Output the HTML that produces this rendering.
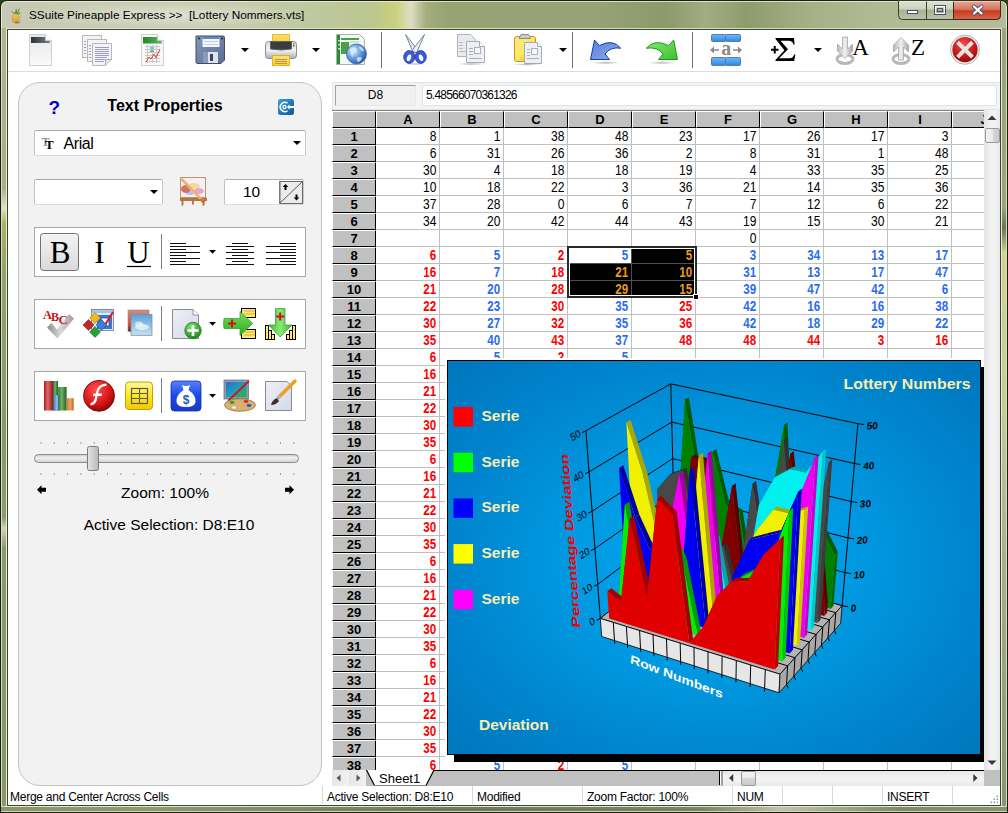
<!DOCTYPE html>
<html><head><meta charset="utf-8">
<style>
*{box-sizing:border-box;margin:0;padding:0}
html,body{width:1008px;height:813px;overflow:hidden;background:#2a4412}
body{position:relative;font-family:"Liberation Sans",sans-serif;font-size:12px;color:#000}
.a{position:absolute}
svg{position:absolute;overflow:visible}
#frame{left:0;top:0;width:1008px;height:813px;border:1px solid #1a2010;border-radius:7px 7px 0 0;box-shadow:inset 0 0 0 1px rgba(240,244,228,0.75);
 background:linear-gradient(90deg,#c6cab4 0px,#c8ccb2 200px,#c0c8a2 300px,#bcc68e 370px,#cad07c 395px,#dcdfc4 410px,#a4ae7c 425px,#96a272 450px,#96a274 600px,#8c9a6a 665px,#a2ad82 705px,#8e9c6c 745px,#a6b086 810px,#b2ba94 880px,#b4bc98 1008px)}
#sideL{left:1px;top:28px;width:6px;height:778px;border-left:1px solid #d8dcc8;border-right:1px solid #d8dcc8;background:linear-gradient(180deg,#b0b690 0,#a8b088 160px,#e0e4c8 180px,#a8b860 195px,#96a468 240px,#8a9866 400px,#8e9c6c 490px,#d0d4b8 500px,#8a9a6a 520px,#8a9868 778px)}
#sideR{left:1001px;top:28px;width:6px;height:778px;border-left:1px solid #d8dcc8;border-right:1px solid #d8dcc8;background:linear-gradient(180deg,#9ca67a 0,#9aa478 180px,#6a7458 200px,#d4d490 225px,#c8cc90 380px,#b8bc98 450px,#a4ac88 560px,#8a9470 778px)}
#sideB{left:1px;top:806px;width:1006px;height:6px;border-top:1px solid #d4d8c4;border-bottom:1px solid #d0d4c0;background:linear-gradient(90deg,#8a9666 0,#8e9a68 150px,#6e7a58 450px,#7a845e 700px,#c0c4a8 780px,#7f8c60 900px,#8a9466 1006px)}
#client{left:7px;top:29px;width:994px;height:777px;border:1px solid #3e4634;background:#fff;box-shadow:0 0 0 1px rgba(230,234,216,0.8)}
#title{left:29px;top:8px;font-size:11.8px;color:#000;white-space:pre}
#tbline{left:8px;top:71px;width:992px;height:1px;background:#dcdcdc}
#panel{left:18px;top:82px;width:304px;height:704px;background:#f2f2f2;border:1px solid #c4c4c4;border-radius:22px}
.box{background:#fff;border:1px solid #a8a8a8}
.combo{background:#fff;border:1px solid #b4b4b4;border-radius:2px}
.ddarr{width:0;height:0;border-left:4px solid transparent;border-right:4px solid transparent;border-top:4px solid #000}
#fbar{left:332px;top:82px;width:668px;height:28px;background:#f4f4f4;border:1px solid #e4e4e4;border-right:none}
#namebox{left:335px;top:85px;width:81px;height:21px;background:#f0f0f0;border:1px solid;border-color:#a0a0a0 #e8e8e8 #e8e8e8 #a0a0a0;text-align:center;line-height:19px}
#fin{left:422px;top:85px;width:575px;height:21px;background:#fff;border:1px solid #dde3ea;border-radius:2px;padding-left:3px;line-height:19px;letter-spacing:-0.8px}
.ch{top:111px;width:64px;height:17px;background:#c0c0c0;border-left:1px solid #fff;border-top:1px solid #fff;border-right:1px solid #000;border-bottom:1px solid #000;text-align:center;font-weight:bold;font-size:13px;line-height:15px}
.rh{left:332px;width:44px;height:17px;background:#c0c0c0;border-top:1px solid #fff;border-left:1px solid #fff;border-right:1px solid #000;border-bottom:1px solid #000;text-align:center;font-weight:bold;font-size:13px;line-height:15px}
.c{position:absolute;width:63px;height:16px;text-align:right;padding-right:3px;line-height:16px;font-size:13px}
.cr,.cb,.co{padding-right:3.6px;font-size:14.5px;transform:scaleX(0.8);transform-origin:100% 50%}
.cn{font-size:14px;transform:scaleX(0.86);transform-origin:100% 50%;padding-right:3px}
.cr{color:#ff0000;font-weight:bold}
.cb{color:#2c6cf0;font-weight:bold}
.co{color:#e89a1c;font-weight:bold}
#status{left:8px;top:786px;width:992px;height:19px;background:#fff}
.sep{top:786px;width:1px;height:18px;background:#d8d8d8}
.st{top:790px;font-size:12px;white-space:pre;letter-spacing:-0.25px}
</style></head>
<body>
<div id="frame" class="a"></div>
<div id="sideL" class="a"></div>
<div id="sideR" class="a"></div>
<div id="sideB" class="a"></div>
<div id="client" class="a"></div>
<div class="a" style="left:20px;top:2px;width:300px;height:26px;border-radius:13px;background:radial-gradient(ellipse 150px 13px at 150px 13px,rgba(240,242,232,0.55),rgba(240,242,232,0) 100%)"></div>
<div id="title" class="a">SSuite Pineapple Express &gt;&gt;  [Lottery Nommers.vts]</div>
<svg width="1008" height="40" style="left:0;top:0" viewBox="0 0 1008 40">
<defs>
<linearGradient id="gWb" x1="0" y1="0" x2="0" y2="1"><stop offset="0" stop-color="#dfe2d2"/><stop offset="0.45" stop-color="#cdd2bc"/><stop offset="0.5" stop-color="#a9b092"/><stop offset="1" stop-color="#bcc2a6"/></linearGradient>
<linearGradient id="gWc" x1="0" y1="0" x2="0" y2="1"><stop offset="0" stop-color="#e8a898"/><stop offset="0.45" stop-color="#d87a64"/><stop offset="0.55" stop-color="#c83c1c"/><stop offset="1" stop-color="#d8684c"/></linearGradient>
<linearGradient id="gPine" x1="0" y1="0" x2="0" y2="1"><stop offset="0" stop-color="#f0c860"/><stop offset="1" stop-color="#d89a30"/></linearGradient>
</defs>
<path d="M898.5 0.5 H1000.5 V15.5 Q1000.5 19.5 996.5 19.5 H902.5 Q898.5 19.5 898.5 15.5 Z" fill="url(#gWb)" stroke="#3a3e30"/>
<path d="M953.5 0.5 H1000.5 V15.5 Q1000.5 19.5 996.5 19.5 H953.5 Z" fill="url(#gWc)" stroke="#3a2a20"/>
<path d="M926.5 1 V19" stroke="#3a3e30"/>
<path d="M899.5 1.5 H999.5" stroke="#f0f2e8" stroke-opacity="0.6"/>
<rect x="907.5" y="10.5" width="10" height="3" fill="#fff" stroke="#4a4e6a"/>
<rect x="934.5" y="5.5" width="11" height="9" fill="none" stroke="#4a4e6a" stroke-width="1"/>
<rect x="935.5" y="6.5" width="9" height="7" fill="none" stroke="#fff" stroke-width="1"/>
<rect x="937.5" y="8.5" width="5" height="3" fill="none" stroke="#4a4e6a" stroke-width="1"/>
<path d="M974 6.5 L981.5 13.5 M981.5 6.5 L974 13.5" stroke="#4a4e6a" stroke-width="4" stroke-linecap="round"/>
<path d="M974 6.5 L981.5 13.5 M981.5 6.5 L974 13.5" stroke="#fff" stroke-width="2.3" stroke-linecap="round"/>
<!-- pineapple -->
<path d="M14.5 14 q1.5 -5 1.5 -6 q1 2 1 4 q1 -3 3 -4 q-1 3 -2 5 q2 -1 3 0 q-2 1 -3 2z M15 13 q-3 -2 -4 -2 q2 2 3 3z" fill="#5a9a3a"/>
<ellipse cx="15.7" cy="18.5" rx="3.6" ry="4.5" fill="url(#gPine)" stroke="#c88a28" stroke-width="0.5"/>
<ellipse cx="17.5" cy="22.5" rx="3" ry="1" fill="#000" opacity="0.25"/>
</svg>

<svg width="1008" height="813" style="left:0;top:0" viewBox="0 0 1008 813">
<defs>
<linearGradient id="gPage" x1="0" y1="0" x2="0" y2="1"><stop offset="0" stop-color="#e6e6e6"/><stop offset="1" stop-color="#fbfbfb"/></linearGradient>
<linearGradient id="gDark" x1="0" y1="0" x2="1" y2="0"><stop offset="0" stop-color="#2c3034"/><stop offset="1" stop-color="#7a8086"/></linearGradient>
<linearGradient id="gGreenBand" x1="0" y1="0" x2="1" y2="0"><stop offset="0" stop-color="#1c8a1c"/><stop offset="1" stop-color="#60b860"/></linearGradient>
<linearGradient id="gFloppy" x1="0" y1="0" x2="1" y2="1"><stop offset="0" stop-color="#8596b8"/><stop offset="1" stop-color="#5a6d94"/></linearGradient>
<linearGradient id="gSilver" x1="0" y1="0" x2="0" y2="1"><stop offset="0" stop-color="#d8dade"/><stop offset="0.5" stop-color="#f4f4f6"/><stop offset="1" stop-color="#a8acb4"/></linearGradient>
<linearGradient id="gYellow" x1="0" y1="0" x2="0" y2="1"><stop offset="0" stop-color="#ffe070"/><stop offset="1" stop-color="#f8d040"/></linearGradient>
<radialGradient id="gGlobe" cx="0.35" cy="0.35" r="0.7"><stop offset="0" stop-color="#e8f2ff"/><stop offset="0.5" stop-color="#6aa0e0"/><stop offset="1" stop-color="#2a5aa8"/></radialGradient>
<linearGradient id="gClip" x1="0" y1="0" x2="1" y2="1"><stop offset="0" stop-color="#fbe88a"/><stop offset="0.5" stop-color="#f8ec60"/><stop offset="1" stop-color="#f0a830"/></linearGradient>
<linearGradient id="gBlueArr" x1="0" y1="0" x2="1" y2="1"><stop offset="0" stop-color="#5a7ad8"/><stop offset="1" stop-color="#8ab4f0"/></linearGradient>
<linearGradient id="gGreenArr" x1="0" y1="0" x2="1" y2="1"><stop offset="0" stop-color="#8ae878"/><stop offset="1" stop-color="#3cc02c"/></linearGradient>
<linearGradient id="gMerge" x1="0" y1="0" x2="0" y2="1"><stop offset="0" stop-color="#6ab8ff"/><stop offset="1" stop-color="#2c8ae8"/></linearGradient>
<linearGradient id="gGrayArr" x1="0" y1="0" x2="1" y2="0"><stop offset="0" stop-color="#b8b8b8"/><stop offset="0.5" stop-color="#f0f0f0"/><stop offset="1" stop-color="#a8a8a8"/></linearGradient>
<radialGradient id="gRed" cx="0.45" cy="0.3" r="0.75"><stop offset="0" stop-color="#f45050"/><stop offset="0.6" stop-color="#c81818"/><stop offset="1" stop-color="#8a0808"/></radialGradient>
<radialGradient id="gShadow" cx="0.5" cy="0.5" r="0.5"><stop offset="0" stop-color="#000" stop-opacity="0.28"/><stop offset="1" stop-color="#000" stop-opacity="0"/></radialGradient>
</defs>
<!-- new doc -->
<path d="M29.5 34.5 H45.5 L51.5 40.5 V65.5 H29.5 Z" fill="url(#gPage)" stroke="#d0d0d0"/>
<path d="M31 37 H45 L50 42 V43 H31 Z" fill="url(#gDark)"/>
<path d="M45.5 34.5 V40.5 H51.5" fill="#fff" stroke="#c8c8c8"/>
<!-- copies -->
<g stroke="#b8b8b8" fill="#f4f4f4">
<rect x="82.5" y="35.5" width="19" height="22"/>
<rect x="87.5" y="39.5" width="19" height="22"/>
<path d="M92.5 43.5 H111.5 V59.5 L105.5 65.5 H92.5 Z"/>
</g>
<g stroke="#9a9ad8" stroke-width="1">
<path d="M84 41.5h2M84 44.5h2M84 47.5h2M84 50.5h2M84 53.5h2M89 45.5h2M89 48.5h2M89 51.5h2M89 54.5h2M89 57.5h2"/>
<path d="M95 47.5h14M95 49.5h14M95 51.5h14M95 53.5h14M95 55.5h14M95 57.5h12M95 59.5h10M95 61.5h9"/>
</g>
<path d="M105.5 65.5 V59.5 H111.5" fill="#e0e0e0" stroke="#b0b0b0"/>
<!-- spreadsheet -->
<path d="M141.5 34.5 H157.5 L163.5 40.5 V65.5 H141.5 Z" fill="#f8f8f8" stroke="#d0d0d0"/>
<path d="M143 37 H157 L162 42 V43.5 H143 Z" fill="url(#gGreenBand)"/>
<path d="M157.5 34.5 V40.5 H163.5" fill="#fff" stroke="#c8c8c8"/>
<g stroke="#c8c8c8" stroke-width="1" fill="none">
<path d="M145 46.5h15M145 49.5h15M145 52.5h15M145 55.5h15M145 58.5h15M145 61.5h15M147.5 45v18M152.5 45v18M156.5 45v18"/>
</g>
<rect x="150" y="47" width="4" height="2" fill="#8ab8e8"/><rect x="150" y="50" width="4" height="2" fill="#6ac86a"/>
<path d="M146 62 L149 57 L151 59 L154 54 L156 58 L160 49" fill="none" stroke="#e04040" stroke-width="1"/>
<!-- floppy -->
<path d="M196 36 H223 Q224.5 36 224.5 37.5 V60 L221 63.5 H197.5 Q196 63.5 196 62 Z" fill="url(#gFloppy)" stroke="#3c4c6c"/>
<rect x="202.5" y="37" width="17" height="10" fill="#f4f6fa"/>
<rect x="202.5" y="37" width="17" height="2" fill="#5a8ad0"/>
<path d="M204 41.5h14M204 44.5h14" stroke="#c8d0e0"/>
<rect x="203" y="52" width="15" height="11" fill="#dfe4ec"/>
<rect x="210" y="54" width="3" height="7" fill="#3a4658"/>
<rect x="203" y="52" width="5" height="11" fill="#8c9ab4"/>
<circle cx="199" cy="38.5" r="1" fill="#222"/><circle cx="222" cy="38.5" r="1" fill="#222"/>
<!-- dropdowns -->
<path d="M241 48 h8 l-4 4 z M312 48 h8 l-4 4 z M559 48 h8 l-4 4 z M814 48 h8 l-4 4 z" fill="#000"/>
<!-- printer -->
<rect x="272.5" y="34.5" width="17" height="7" fill="url(#gYellow)" stroke="#e8b830"/>
<rect x="265.5" y="41.5" width="31" height="17" rx="3" fill="url(#gSilver)" stroke="#8a9098"/>
<path d="M270.5 41.5 H291.5 V49 Q281 51 270.5 49 Z" fill="#3a3c40" stroke="#606468"/>
<rect x="293" y="43" width="1.5" height="1.5" fill="#30c030"/><rect x="293" y="45" width="1.5" height="1.5" fill="#e03030"/>
<rect x="272.5" y="55.5" width="17" height="10" fill="url(#gYellow)" stroke="#e8b020"/>
<path d="M275 59.5h12M275 61.5h12M275 63.5h12" stroke="#b89a40"/>
<!-- web doc -->
<path d="M336.5 34.5 H359.5 L364.5 39.5 V64.5 H336.5 Z" fill="#f4f8f4" stroke="#a0b8a0"/>
<rect x="337" y="35" width="3" height="29" fill="#2e8a3a"/>
<path d="M341 38h18v2h-18z M341 42h8v12h-8z" fill="#48a048"/>
<path d="M349.5 42h10M349.5 45h10M349.5 48h10" stroke="#b0d0b0"/>
<rect x="338" y="40" width="2" height="1.5" fill="#a8e0a8"/><rect x="338" y="44" width="2" height="1.5" fill="#a8e0a8"/><rect x="338" y="48" width="2" height="1.5" fill="#a8e0a8"/>
<circle cx="356.5" cy="54" r="10" fill="url(#gGlobe)" stroke="#3a64a8" stroke-width="0.8"/>
<path d="M350 49 q3 -3 6 -1 q2 3 -1 5 q-3 1 -2 4 q-3 -2 -3 -8z M359 46 q4 1 5 5 q-2 1 -3 -1 q-2 -1 -2 -4z M357 58 q3 -2 5 0 q-1 3 -4 4 q-2 -2 -1 -4z" fill="#d8e8f8" opacity="0.85"/>
<!-- separators -->
<path d="M381.5 32v36M572.5 32v36M692.5 32v36" stroke="#707070"/>
<!-- scissors -->
<path d="M405.5 34.5 L418 50.5 L413.5 53 Z" fill="#e4e8f0" stroke="#6a7a98" stroke-width="0.9" stroke-linejoin="round"/>
<path d="M424.5 34.5 L412 50.5 L416.5 53 Z" fill="#eef0f6" stroke="#6a7a98" stroke-width="0.9" stroke-linejoin="round"/>
<ellipse cx="409.3" cy="57" rx="5.6" ry="6.4" fill="#3a5ad8" stroke="#20359a" stroke-width="0.8"/>
<ellipse cx="420.7" cy="57" rx="5.6" ry="6.4" fill="#3a5ad8" stroke="#20359a" stroke-width="0.8"/>
<ellipse cx="409" cy="57.8" rx="2" ry="3.4" fill="#fff" transform="rotate(20 409 57.8)"/>
<ellipse cx="421" cy="57.8" rx="2" ry="3.4" fill="#fff" transform="rotate(-20 421 57.8)"/>
<ellipse cx="415" cy="64" rx="11" ry="1.3" fill="url(#gShadow)"/>
<!-- copy -->
<path d="M457.5 34.5 H470.5 L475.5 39.5 V56.5 H457.5 Z" fill="#e8eaee" stroke="#b0b4bc"/>
<path d="M459 42.5h4M459 45.5h4M459 48.5h4M459 51.5h12" stroke="#b8bcc4"/>
<path d="M466.5 41.5 H479.5 L484.5 46.5 V62.5 H466.5 Z" fill="#eef0f4" stroke="#a8acb4"/>
<path d="M469 48.5h4M469 51.5h4M469 54.5h4M469 58.5h13" stroke="#a8b0c0"/>
<rect x="474.5" y="47.5" width="6" height="6" fill="#f6f8fa" stroke="#a8b0c0"/>
<path d="M479.5 41.5 V46.5 H484.5" fill="#fff" stroke="#a8acb4"/>
<ellipse cx="471" cy="64" rx="14" ry="1.5" fill="url(#gShadow)"/>
<!-- paste -->
<rect x="514.5" y="36.5" width="21" height="25" rx="2.5" fill="url(#gClip)" stroke="#d88a18"/>
<path d="M519 38.5 L521 34.5 H528.5 L530.5 38.5 Z" fill="#c8ccd0" stroke="#8a8e94"/>
<path d="M524.5 42.5 H537.5 L541.5 46.5 V63.5 H524.5 Z" fill="#eef0f6" stroke="#a8acb8"/>
<path d="M527 49.5h3M527 52.5h3M527 55.5h3M527 58.5h12" stroke="#a8b0c0"/>
<rect x="531.5" y="48.5" width="6" height="6" fill="#f6f8fa" stroke="#a8b0c0"/>
<path d="M537.5 42.5 V46.5 H541.5" fill="#fff" stroke="#a8acb8"/>
<ellipse cx="527" cy="64.5" rx="15" ry="1.3" fill="url(#gShadow)"/>
<!-- undo -->
<path d="M594.5 40 L590.5 59.5 H609.5 L605 54 Q610.5 46.5 620.7 48.2 Q613 38.5 599.5 45.5 Z" fill="url(#gBlueArr)" stroke="#1c3aa8" stroke-width="1" stroke-linejoin="round"/>
<ellipse cx="606" cy="62.8" rx="14" ry="1.7" fill="url(#gShadow)"/>
<!-- redo -->
<path d="M673.7 40 L677.5 59.5 H658.5 L663 54 Q657.5 46.5 646.3 48.2 Q655 38.5 668.5 45.5 Z" fill="url(#gGreenArr)" stroke="#1c9a1c" stroke-width="1" stroke-linejoin="round"/>
<ellipse cx="662" cy="62.8" rx="14" ry="1.7" fill="url(#gShadow)"/>
<!-- merge -->
<rect x="711.5" y="34.5" width="14" height="7" rx="1" fill="url(#gMerge)" stroke="#607890"/>
<rect x="725.5" y="34.5" width="15" height="7" rx="1" fill="url(#gMerge)" stroke="#607890"/>
<rect x="711.5" y="57.5" width="14" height="8" rx="1" fill="url(#gMerge)" stroke="#607890"/>
<rect x="725.5" y="57.5" width="15" height="8" rx="1" fill="url(#gMerge)" stroke="#607890"/>
<text x="726.2" y="54.8" font-family="Liberation Serif" font-weight="bold" font-size="20" fill="#8a8a8a" text-anchor="middle">a</text>
<path d="M711 50h8M741 50h-8" stroke="#8a8a8a" stroke-width="1.6"/>
<path d="M710 50 l4 -3.5 v7z M742 50 l-4 -3.5 v7z" fill="#8a8a8a"/>
<!-- sum -->
<path d="M771 49.8h7.5M774.75 46v7.6" stroke="#000" stroke-width="2"/>
<path d="M775.5 38 H794 L794.6 44.5 H793.4 Q792.6 40.8 788.6 40.8 H780.6 L788 49.3 L779.2 58.2 H789.6 Q793.2 58.2 794.2 54.6 H795.4 L794.2 61 H775.5 V60 L784.4 50.3 L775.5 39 Z" fill="#000"/>
<!-- sort A -->
<ellipse cx="845" cy="59" rx="8" ry="4.5" fill="none" stroke="#b8b8b8" stroke-width="3"/>
<path d="M842.5 37 h5 v12 l5 -5 v7 l-7.5 7.5 l-7.5 -7.5 v-7 l5 5 z" fill="url(#gGrayArr)" stroke="#a8a8a8" stroke-width="0.8"/>
<text x="860.5" y="55" font-family="Liberation Serif" font-size="23" fill="#000" text-anchor="middle">A</text>
<!-- sort Z -->
<ellipse cx="901" cy="59" rx="8" ry="4.5" fill="none" stroke="#b8b8b8" stroke-width="3"/>
<path d="M898.5 60 h5 v-13 l5 5 v-7 l-7.5 -7.5 l-7.5 7.5 v7 l5 -5 z" fill="url(#gGrayArr)" stroke="#a8a8a8" stroke-width="0.8"/>
<text x="918" y="55" font-family="Liberation Serif" font-size="23" fill="#000" text-anchor="middle">Z</text>
<!-- close -->
<circle cx="965" cy="49.7" r="14.6" fill="#e8e8e8" stroke="#b8b8b8"/>
<circle cx="965" cy="49.7" r="12.6" fill="url(#gRed)"/>
<path d="M959 43.7 L971 55.7 M971 43.7 L959 55.7" stroke="#e4e4e4" stroke-width="4" stroke-linecap="square"/>
</svg>

<div id="tbline" class="a"></div>

<div id="panel" class="a"></div>
<div class="a combo" style="left:34px;top:130px;width:272px;height:26px;border-color:#a8a8a8 #c8c8c8 #d8dce4 #c0c0c0"></div>
<div class="a combo" style="left:34px;top:179px;width:129px;height:26px;border-color:#a8a8a8 #c8c8c8 #d8dce4 #c0c0c0"></div>
<div class="a combo" style="left:224px;top:179px;width:80px;height:26px;border-color:#b0b0b0 #c8c8c8 #d8dce4 #c0c0c0"></div>
<div class="a box" style="left:34px;top:227px;width:272px;height:50px"></div>
<div class="a box" style="left:34px;top:299px;width:272px;height:50px"></div>
<div class="a box" style="left:34px;top:371px;width:272px;height:50px"></div>
<svg width="1008" height="813" style="left:0;top:0" viewBox="0 0 1008 813">
<defs>
<linearGradient id="pBlue" x1="0" y1="0" x2="1" y2="1"><stop offset="0" stop-color="#38a0e0"/><stop offset="1" stop-color="#0a5a9c"/></linearGradient>
<linearGradient id="pBtn" x1="0" y1="0" x2="0" y2="1"><stop offset="0" stop-color="#f4f4f4"/><stop offset="1" stop-color="#dadada"/></linearGradient>
<linearGradient id="pTrack" x1="0" y1="0" x2="0" y2="1"><stop offset="0" stop-color="#c8c8c8"/><stop offset="0.4" stop-color="#f0f0f0"/><stop offset="1" stop-color="#d0d0d0"/></linearGradient>
<linearGradient id="pThumb" x1="0" y1="0" x2="1" y2="0"><stop offset="0" stop-color="#e4e4e4"/><stop offset="1" stop-color="#b8b8b8"/></linearGradient>
<linearGradient id="pEasel" x1="0" y1="0" x2="1" y2="1"><stop offset="0" stop-color="#f8e8f0"/><stop offset="0.3" stop-color="#e06848"/><stop offset="0.5" stop-color="#f0d060"/><stop offset="0.7" stop-color="#e868b8"/><stop offset="1" stop-color="#f8f0f0"/></linearGradient>
</defs>
<text x="48.5" y="114" font-family="Liberation Sans" font-weight="bold" font-size="19" fill="#0000c8">?</text>
<text x="165" y="110.8" font-family="Liberation Sans" font-weight="bold" font-size="16" fill="#000" text-anchor="middle">Text Properties</text>
<rect x="278" y="99" width="16" height="16" rx="2.5" fill="url(#pBlue)"/>
<path d="M287.5 103.2 A4.6 4.6 0 1 0 287.5 110.8" fill="none" stroke="#fff" stroke-width="1.6"/>
<circle cx="284.5" cy="107" r="1.6" fill="none" stroke="#fff" stroke-width="1.3"/>
<path d="M288.5 107 H294.5" stroke="#fff" stroke-width="2"/>
<path d="M287 107 l2.5 -2.8 v5.6 z" fill="#fff"/>
<!-- font icon -->
<text x="41.5" y="146" font-family="Liberation Serif" font-weight="bold" font-size="12" fill="#909090">T</text>
<text x="45" y="149" font-family="Liberation Serif" font-weight="bold" font-size="13" fill="#000">T</text>
<text x="63.5" y="149" font-family="Liberation Sans" font-size="16" fill="#000" letter-spacing="-0.4">Arial</text>
<path d="M293 141 h8 l-4 4 z M150 190 h8 l-4 4 z" fill="#000"/>
<!-- easel -->
<rect x="180.5" y="177.5" width="25" height="20" fill="#f6f0f4" stroke="#c09070"/>
<ellipse cx="186" cy="189" rx="5" ry="4" fill="#c84830" opacity="0.75"/>
<ellipse cx="194" cy="186" rx="6" ry="3" fill="#f0d070" opacity="0.7"/>
<ellipse cx="199" cy="191" rx="5" ry="3" fill="#e070c0" opacity="0.6"/>
<ellipse cx="190" cy="193" rx="4" ry="2" fill="#70a0e0" opacity="0.5"/>
<path d="M180 198 h27 v3 h-27z" fill="#b07840"/>
<path d="M182.5 201 v4.5 M193 201 v3.5 M203.5 201 v4.5" stroke="#a87040" stroke-width="1.8"/>
<path d="M181.5 179 L203 201" stroke="#f0b070" stroke-width="2.6"/>
<path d="M200.5 199 L204.5 203" stroke="#d87030" stroke-width="2.8"/>
<!-- spin -->
<text x="243" y="197" font-family="Liberation Sans" font-size="15.5" fill="#000">10</text>
<rect x="279.5" y="181.5" width="23" height="22" fill="#ececec" stroke="#8a8a8a"/>
<path d="M280 203 L302.5 181.5" stroke="#5a5a5a" stroke-width="1"/>
<path d="M280 181.5 H302.5 V203.5 M280 181.5 V203.5 H302.5" fill="none" stroke="#6a6a6a"/>
<path d="M285.5 184 l-2.8 3 h1.8 v3 h2 v-3 h1.8 z M296.5 200.5 l-2.8 -3 h1.8 v-3 h2 v3 h1.8 z" fill="#000"/>
<!-- B I U -->
<rect x="40.5" y="233.5" width="38" height="37" rx="3" fill="url(#pBtn)" stroke="#707070"/>
<text x="60" y="262.5" font-family="Liberation Serif" font-size="31" fill="#000" text-anchor="middle">B</text>
<text x="99.5" y="262.5" font-family="Liberation Serif" font-size="31" fill="#000" text-anchor="middle">I</text>
<text x="138.5" y="262.5" font-family="Liberation Serif" font-size="31" fill="#000" text-anchor="middle">U</text>
<path d="M127 266.5 H151" stroke="#000" stroke-width="1.2"/>
<path d="M161.5 234 V269 M161.5 306 V341 M161.5 378 V413" stroke="#7a7a7a"/>
<g stroke="#111" stroke-width="1">
<path d="M170 243.5h16M170 246.5h30M170 249.5h16M170 252.5h30M170 255.5h16M170 258.5h30M170 261.5h16M170 264.5h30"/>
<path d="M232 243.5h16M226 246.5h28M232 249.5h16M226 252.5h28M232 255.5h16M226 258.5h28M232 261.5h16M226 264.5h28"/>
<path d="M280 243.5h16M266 246.5h30M280 249.5h16M266 252.5h30M280 255.5h16M266 258.5h30M280 261.5h16M266 264.5h30"/>
</g>
<path d="M209 250 h7 l-3.5 3.7 z M209 322 h7 l-3.5 3.7 z M209 394 h7 l-3.5 3.7 z" fill="#000"/>
</svg>
<svg width="1008" height="813" style="left:0;top:0" viewBox="0 0 1008 813">
<defs>
<linearGradient id="iGray" x1="0" y1="0" x2="1" y2="0"><stop offset="0" stop-color="#8a8a8a"/><stop offset="0.5" stop-color="#d8d8d8"/><stop offset="1" stop-color="#9a9a9a"/></linearGradient>
<linearGradient id="iSky" x1="0" y1="0" x2="0" y2="1"><stop offset="0" stop-color="#5aa0d8"/><stop offset="1" stop-color="#c8e0f0"/></linearGradient>
<linearGradient id="iSunset" x1="0" y1="0" x2="0" y2="1"><stop offset="0" stop-color="#c89090"/><stop offset="0.6" stop-color="#e05030"/><stop offset="1" stop-color="#602020"/></linearGradient>
<linearGradient id="iPage" x1="0" y1="0" x2="1" y2="1"><stop offset="0" stop-color="#eef0f8"/><stop offset="1" stop-color="#d4d8e8"/></linearGradient>
<radialGradient id="iGreenC" cx="0.4" cy="0.3" r="0.7"><stop offset="0" stop-color="#8ae070"/><stop offset="1" stop-color="#1a8a1a"/></radialGradient>
<linearGradient id="iGreenA" x1="0" y1="0" x2="0" y2="1"><stop offset="0" stop-color="#7ae060"/><stop offset="1" stop-color="#2aaa1a"/></linearGradient>
<linearGradient id="iGreenD" x1="0" y1="0" x2="1" y2="0"><stop offset="0" stop-color="#3ab82a"/><stop offset="0.5" stop-color="#8ae878"/><stop offset="1" stop-color="#3ab82a"/></linearGradient>
<radialGradient id="iFlash" cx="0.4" cy="0.3" r="0.75"><stop offset="0" stop-color="#ff5050"/><stop offset="0.7" stop-color="#d01010"/><stop offset="1" stop-color="#7a0808"/></radialGradient>
<linearGradient id="iYel" x1="0" y1="0" x2="0" y2="1"><stop offset="0" stop-color="#fff8a0"/><stop offset="0.5" stop-color="#ffe820"/><stop offset="1" stop-color="#f0c800"/></linearGradient>
<linearGradient id="iBlueSq" x1="0" y1="0" x2="0" y2="1"><stop offset="0" stop-color="#5a80f8"/><stop offset="0.5" stop-color="#1a48e8"/><stop offset="1" stop-color="#1a38c8"/></linearGradient>
<linearGradient id="iScreen" x1="0" y1="0" x2="1" y2="1"><stop offset="0" stop-color="#2a70d0"/><stop offset="0.55" stop-color="#20a0b0"/><stop offset="1" stop-color="#30b030"/></linearGradient>
<linearGradient id="iRedBar" x1="0" y1="0" x2="1" y2="0"><stop offset="0" stop-color="#a82020"/><stop offset="0.4" stop-color="#e06868"/><stop offset="1" stop-color="#901818"/></linearGradient>
<linearGradient id="iGrnBar" x1="0" y1="0" x2="1" y2="0"><stop offset="0" stop-color="#2a7a2a"/><stop offset="0.4" stop-color="#70b070"/><stop offset="1" stop-color="#206020"/></linearGradient>
<linearGradient id="iBluBar" x1="0" y1="0" x2="1" y2="0"><stop offset="0" stop-color="#3a70c0"/><stop offset="0.5" stop-color="#90c0f0"/><stop offset="1" stop-color="#3a68b0"/></linearGradient>
<linearGradient id="iOrBar" x1="0" y1="0" x2="1" y2="0"><stop offset="0" stop-color="#c87830"/><stop offset="0.5" stop-color="#e8a860"/><stop offset="1" stop-color="#b86828"/></linearGradient>
</defs>
<!-- ABC check -->
<path d="M47 327.5 L51.5 323 L57 329.5 L69 314 L74 318.5 L57.5 338.5 Z" fill="url(#iGray)"/>
<text x="43" y="319" font-family="Liberation Serif" font-weight="bold" font-size="12.5" fill="#c81818">A</text>
<text x="51" y="321" font-family="Liberation Serif" font-weight="bold" font-size="12" fill="#c81818">B</text>
<text x="58.5" y="323.5" font-family="Liberation Serif" font-weight="bold" font-size="13" fill="#c81818">C</text>
<!-- window + diamonds -->
<rect x="91.5" y="309.5" width="22" height="21" fill="#dfe8f4" stroke="#8090a8"/>
<rect x="92" y="310" width="21" height="3" fill="#a8c4e8"/>
<rect x="97" y="315" width="15" height="14" fill="#3a78d0"/>
<rect x="101" y="318" width="8" height="8" fill="#fff" stroke="#2050a0" stroke-width="0.8"/>
<path d="M101 320 L105 325 L113 312" fill="none" stroke="#e01818" stroke-width="2"/>
<path d="M95 312.5 L100.5 318 L95 323.5 L89.5 318 Z" fill="#f0b818" stroke="#8a6a10" stroke-width="0.5"/>
<path d="M88.5 319.5 L94 325 L88.5 330.5 L83 325 Z" fill="#c02828" stroke="#6a1010" stroke-width="0.5"/>
<path d="M101.5 319.5 L107 325 L101.5 330.5 L96 325 Z" fill="#3a80d8" stroke="#1a4080" stroke-width="0.5"/>
<path d="M95 326.5 L100.5 332 L95 337.5 L89.5 332 Z" fill="#28a038" stroke="#106018" stroke-width="0.5"/>
<!-- photos -->
<rect x="128" y="310" width="21" height="21.5" fill="url(#iSunset)" stroke="#a08080" stroke-width="0.6"/>
<rect x="131" y="314.3" width="21" height="21" fill="url(#iSky)" stroke="#8090a0" stroke-width="0.8"/>
<ellipse cx="142" cy="327" rx="7" ry="3" fill="#eef4fa" opacity="0.8"/>
<ellipse cx="139" cy="324" rx="4" ry="2.5" fill="#eef4fa" opacity="0.7"/>
<!-- new page + plus -->
<path d="M172.5 309.5 H193 L198.5 315 V338.5 H172.5 Z" fill="url(#iPage)" stroke="#8a8a8a"/>
<path d="M193 309.5 V315 H198.5" fill="#fff" stroke="#9a9a9a"/>
<circle cx="193" cy="330.5" r="8.2" fill="url(#iGreenC)" stroke="#1a7a1a" stroke-width="0.8"/>
<path d="M193 325 V336 M187.5 330.5 H198.5" stroke="#fff" stroke-width="2.6"/>
<!-- arrow right + boxes -->
<g stroke="#000" stroke-width="1" fill="#ffe878">
<rect x="241.5" y="308.5" width="14" height="9"/>
<rect x="241.5" y="329.5" width="14" height="9"/>
</g>
<path d="M244 311h11M244 314h11M244 332h11M244 335h11" stroke="#d8b020"/>
<path d="M224 318.5 H240 V311.5 L252.7 323.4 L240 335.5 V328.5 H224 Q223 323.5 224 318.5 Z" fill="url(#iGreenA)" stroke="#2a9a2a" stroke-width="0.7"/>
<path d="M232 319.5 V327.5 M228 323.5 H236" stroke="#d01010" stroke-width="2"/>
<!-- arrow down + bars -->
<g stroke="#000" stroke-width="1" fill="#ffe878">
<rect x="265.5" y="325.5" width="3" height="14"/><rect x="268.5" y="330.5" width="3" height="9"/><rect x="271.5" y="334.5" width="3" height="5"/>
<rect x="292.5" y="325.5" width="3" height="14"/><rect x="289.5" y="330.5" width="3" height="9"/><rect x="286.5" y="334.5" width="3" height="5"/>
</g>
<path d="M275.5 308.5 H285 V325 H292 L280.2 337 L268.5 325 H275.5 Z" fill="url(#iGreenD)" stroke="#2a9a2a" stroke-width="0.7"/>
<path d="M280.2 312.5 V320.5 M276.2 316.5 H284.2" stroke="#d01010" stroke-width="2"/>
<!-- bar chart -->
<rect x="53" y="381" width="5" height="29.5" fill="url(#iGrnBar)"/>
<rect x="44" y="381" width="9.2" height="29.5" fill="url(#iRedBar)"/>
<rect x="53.5" y="395.2" width="6.5" height="15.3" fill="url(#iBluBar)"/>
<rect x="58.2" y="387" width="8.4" height="23.5" fill="url(#iGrnBar)"/>
<rect x="66.6" y="398.2" width="7.1" height="12.3" fill="url(#iOrBar)"/>
<!-- flash -->
<circle cx="99" cy="395.8" r="15.5" fill="url(#iFlash)" stroke="#6a0a0a" stroke-width="0.8"/>
<path d="M106.5 386 Q100 385.5 98.5 392 L96.5 401 Q95 405 90.5 405.5 L90.5 403 Q93.5 402.5 94.5 399.5 L96.5 391 Q98.5 383.5 106.5 383.5 Z M93.5 393.5 H102 L101.5 396 H93 Z" fill="#fff"/>
<!-- yellow table -->
<rect x="125.5" y="382" width="27" height="27.5" rx="3.5" fill="url(#iYel)" stroke="#c8a000"/>
<rect x="131.5" y="388.5" width="16" height="15" fill="none" stroke="#5a5a5a" stroke-width="1.2"/>
<path d="M139.5 388.5 V403.5 M131.5 393.5 H147.5 M131.5 398.5 H147.5" stroke="#5a5a5a" stroke-width="1.1"/>
<!-- money bag -->
<rect x="171" y="381" width="30" height="30" rx="3.5" fill="url(#iBlueSq)" stroke="#1030a0" stroke-width="0.8"/>
<path d="M182 385 Q186 387 190 385 L188.5 390 Q196 395 195.5 402 Q195 407 186 407 Q177 407 176.5 402 Q176 395 183.5 390 Z" fill="#fff"/>
<text x="186" y="404" font-family="Liberation Sans" font-weight="bold" font-size="12" fill="#1a60c0" text-anchor="middle">$</text>
<!-- monitor + palette -->
<rect x="224" y="380" width="24.5" height="19" fill="#8a9ab0" stroke="#6a7890" stroke-width="0.8"/>
<rect x="226" y="382" width="20.5" height="15" fill="url(#iScreen)"/>
<path d="M233 401 h8 v2 h-8z" fill="#a0a8b8"/>
<path d="M249 381 L228 401" stroke="#c81818" stroke-width="1.8"/>
<ellipse cx="240" cy="405" rx="15.5" ry="6.3" fill="#d8b070" stroke="#8a6a30" stroke-width="0.7"/>
<ellipse cx="232" cy="402.5" rx="2.5" ry="1.4" fill="#28a028"/><ellipse cx="246" cy="401.5" rx="2.5" ry="1.4" fill="#e02828"/><ellipse cx="249" cy="405.5" rx="2.5" ry="1.4" fill="#2858d0"/><ellipse cx="234" cy="407.5" rx="2" ry="1.2" fill="#f0f0f0"/>
<!-- doc + brush -->
<path d="M265.5 381.5 H287 L291.5 386 V410.5 H265.5 Z" fill="url(#iPage)" stroke="#8a8a8a"/>
<path d="M295 381 L279 397" stroke="#f0a020" stroke-width="3.5" stroke-linecap="round"/>
<path d="M280 396 L277.5 398.5" stroke="#b0b0b0" stroke-width="3"/>
<path d="M277 398 Q272 400 271 405 Q276 405 279 401 Z" fill="#3a3020"/>
</svg>

<svg width="1008" height="813" style="left:0;top:0" viewBox="0 0 1008 813">
<g fill="#a0a0a0">
<rect x="40.5" y="442" width="1" height="2"/><rect x="40.5" y="473" width="1" height="2"/>
<rect x="53.8" y="442" width="1" height="2"/><rect x="53.8" y="473" width="1" height="2"/>
<rect x="67.1" y="442" width="1" height="2"/><rect x="67.1" y="473" width="1" height="2"/>
<rect x="80.4" y="442" width="1" height="2"/><rect x="80.4" y="473" width="1" height="2"/>
<rect x="93.7" y="442" width="1" height="2"/><rect x="93.7" y="473" width="1" height="2"/>
<rect x="107.0" y="442" width="1" height="2"/><rect x="107.0" y="473" width="1" height="2"/>
<rect x="120.3" y="442" width="1" height="2"/><rect x="120.3" y="473" width="1" height="2"/>
<rect x="133.6" y="442" width="1" height="2"/><rect x="133.6" y="473" width="1" height="2"/>
<rect x="146.9" y="442" width="1" height="2"/><rect x="146.9" y="473" width="1" height="2"/>
<rect x="160.2" y="442" width="1" height="2"/><rect x="160.2" y="473" width="1" height="2"/>
<rect x="173.6" y="442" width="1" height="2"/><rect x="173.6" y="473" width="1" height="2"/>
<rect x="186.9" y="442" width="1" height="2"/><rect x="186.9" y="473" width="1" height="2"/>
<rect x="200.2" y="442" width="1" height="2"/><rect x="200.2" y="473" width="1" height="2"/>
<rect x="213.5" y="442" width="1" height="2"/><rect x="213.5" y="473" width="1" height="2"/>
<rect x="226.8" y="442" width="1" height="2"/><rect x="226.8" y="473" width="1" height="2"/>
<rect x="240.1" y="442" width="1" height="2"/><rect x="240.1" y="473" width="1" height="2"/>
<rect x="253.4" y="442" width="1" height="2"/><rect x="253.4" y="473" width="1" height="2"/>
<rect x="266.7" y="442" width="1" height="2"/><rect x="266.7" y="473" width="1" height="2"/>
<rect x="280.0" y="442" width="1" height="2"/><rect x="280.0" y="473" width="1" height="2"/>
<rect x="293.3" y="442" width="1" height="2"/><rect x="293.3" y="473" width="1" height="2"/>
</g>
<rect x="34.5" y="454.5" width="264" height="8" rx="4" fill="url(#pTrack)" stroke="#8a8a8a"/>
<rect x="87.5" y="446.5" width="11" height="24" rx="2" fill="url(#pThumb)" stroke="#7a7a7a"/>
<path d="M37 489.8 l4.5 -4.5 v2.5 h4.5 v4 h-4.5 v2.5 z M294 489.8 l-4.5 -4.5 v2.5 h-4.5 v4 h4.5 v2.5 z" fill="#000"/>
<text x="165" y="498" font-family="Liberation Sans" font-size="15.5" fill="#000" text-anchor="middle">Zoom: 100%</text>
<text x="169" y="530" font-family="Liberation Sans" font-size="15.5" fill="#000" text-anchor="middle">Active Selection: D8:E10</text>
</svg>


<div id="fbar" class="a"></div>
<div id="namebox" class="a">D8</div>
<div id="fin" class="a">5.48566070361326</div>

<!-- grid -->
<div class="a" style="left:332px;top:110px;width:652px;height:1px;background:#808080"></div>
<div class="a" style="left:332px;top:111px;width:44px;height:17px;background:#c0c0c0;border-top:1px solid #fff;border-left:1px solid #fff;border-right:1px solid #000;border-bottom:1px solid #000"></div>
<div class="a" style="left:332px;top:111px;width:652px;height:659px;overflow:hidden">
<div class="a" style="left:-332px;top:-111px;width:1008px;height:813px">
<div class="a" style="left:439px;top:128px;width:1px;height:642px;background:#c0c0c0"></div>
<div class="a" style="left:503px;top:128px;width:1px;height:642px;background:#c0c0c0"></div>
<div class="a" style="left:567px;top:128px;width:1px;height:642px;background:#c0c0c0"></div>
<div class="a" style="left:631px;top:128px;width:1px;height:642px;background:#c0c0c0"></div>
<div class="a" style="left:695px;top:128px;width:1px;height:642px;background:#c0c0c0"></div>
<div class="a" style="left:759px;top:128px;width:1px;height:642px;background:#c0c0c0"></div>
<div class="a" style="left:823px;top:128px;width:1px;height:642px;background:#c0c0c0"></div>
<div class="a" style="left:887px;top:128px;width:1px;height:642px;background:#c0c0c0"></div>
<div class="a" style="left:951px;top:128px;width:1px;height:642px;background:#c0c0c0"></div>
<div class="a" style="left:376px;top:144px;width:608px;height:1px;background:#c0c0c0"></div>
<div class="a" style="left:376px;top:161px;width:608px;height:1px;background:#c0c0c0"></div>
<div class="a" style="left:376px;top:178px;width:608px;height:1px;background:#c0c0c0"></div>
<div class="a" style="left:376px;top:195px;width:608px;height:1px;background:#c0c0c0"></div>
<div class="a" style="left:376px;top:212px;width:608px;height:1px;background:#c0c0c0"></div>
<div class="a" style="left:376px;top:229px;width:608px;height:1px;background:#c0c0c0"></div>
<div class="a" style="left:376px;top:246px;width:608px;height:1px;background:#c0c0c0"></div>
<div class="a" style="left:376px;top:263px;width:608px;height:1px;background:#c0c0c0"></div>
<div class="a" style="left:376px;top:280px;width:608px;height:1px;background:#c0c0c0"></div>
<div class="a" style="left:376px;top:297px;width:608px;height:1px;background:#c0c0c0"></div>
<div class="a" style="left:376px;top:314px;width:608px;height:1px;background:#c0c0c0"></div>
<div class="a" style="left:376px;top:331px;width:608px;height:1px;background:#c0c0c0"></div>
<div class="a" style="left:376px;top:348px;width:608px;height:1px;background:#c0c0c0"></div>
<div class="a" style="left:376px;top:365px;width:608px;height:1px;background:#c0c0c0"></div>
<div class="a" style="left:376px;top:382px;width:608px;height:1px;background:#c0c0c0"></div>
<div class="a" style="left:376px;top:399px;width:608px;height:1px;background:#c0c0c0"></div>
<div class="a" style="left:376px;top:416px;width:608px;height:1px;background:#c0c0c0"></div>
<div class="a" style="left:376px;top:433px;width:608px;height:1px;background:#c0c0c0"></div>
<div class="a" style="left:376px;top:450px;width:608px;height:1px;background:#c0c0c0"></div>
<div class="a" style="left:376px;top:467px;width:608px;height:1px;background:#c0c0c0"></div>
<div class="a" style="left:376px;top:484px;width:608px;height:1px;background:#c0c0c0"></div>
<div class="a" style="left:376px;top:501px;width:608px;height:1px;background:#c0c0c0"></div>
<div class="a" style="left:376px;top:518px;width:608px;height:1px;background:#c0c0c0"></div>
<div class="a" style="left:376px;top:535px;width:608px;height:1px;background:#c0c0c0"></div>
<div class="a" style="left:376px;top:552px;width:608px;height:1px;background:#c0c0c0"></div>
<div class="a" style="left:376px;top:569px;width:608px;height:1px;background:#c0c0c0"></div>
<div class="a" style="left:376px;top:586px;width:608px;height:1px;background:#c0c0c0"></div>
<div class="a" style="left:376px;top:603px;width:608px;height:1px;background:#c0c0c0"></div>
<div class="a" style="left:376px;top:620px;width:608px;height:1px;background:#c0c0c0"></div>
<div class="a" style="left:376px;top:637px;width:608px;height:1px;background:#c0c0c0"></div>
<div class="a" style="left:376px;top:654px;width:608px;height:1px;background:#c0c0c0"></div>
<div class="a" style="left:376px;top:671px;width:608px;height:1px;background:#c0c0c0"></div>
<div class="a" style="left:376px;top:688px;width:608px;height:1px;background:#c0c0c0"></div>
<div class="a" style="left:376px;top:705px;width:608px;height:1px;background:#c0c0c0"></div>
<div class="a" style="left:376px;top:722px;width:608px;height:1px;background:#c0c0c0"></div>
<div class="a" style="left:376px;top:739px;width:608px;height:1px;background:#c0c0c0"></div>
<div class="a" style="left:376px;top:756px;width:608px;height:1px;background:#c0c0c0"></div>
<div class="a ch" style="left:376px">A</div>
<div class="a ch" style="left:440px">B</div>
<div class="a ch" style="left:504px">C</div>
<div class="a ch" style="left:568px">D</div>
<div class="a ch" style="left:632px">E</div>
<div class="a ch" style="left:696px">F</div>
<div class="a ch" style="left:760px">G</div>
<div class="a ch" style="left:824px">H</div>
<div class="a ch" style="left:888px">I</div>
<div class="a ch" style="left:952px">J</div>
<div class="a rh" style="top:128px">1</div>
<div class="a rh" style="top:145px">2</div>
<div class="a rh" style="top:162px">3</div>
<div class="a rh" style="top:179px">4</div>
<div class="a rh" style="top:196px">5</div>
<div class="a rh" style="top:213px">6</div>
<div class="a rh" style="top:230px">7</div>
<div class="a rh" style="top:247px">8</div>
<div class="a rh" style="top:264px">9</div>
<div class="a rh" style="top:281px">10</div>
<div class="a rh" style="top:298px">11</div>
<div class="a rh" style="top:315px">12</div>
<div class="a rh" style="top:332px">13</div>
<div class="a rh" style="top:349px">14</div>
<div class="a rh" style="top:366px">15</div>
<div class="a rh" style="top:383px">16</div>
<div class="a rh" style="top:400px">17</div>
<div class="a rh" style="top:417px">18</div>
<div class="a rh" style="top:434px">19</div>
<div class="a rh" style="top:451px">20</div>
<div class="a rh" style="top:468px">21</div>
<div class="a rh" style="top:485px">22</div>
<div class="a rh" style="top:502px">23</div>
<div class="a rh" style="top:519px">24</div>
<div class="a rh" style="top:536px">25</div>
<div class="a rh" style="top:553px">26</div>
<div class="a rh" style="top:570px">27</div>
<div class="a rh" style="top:587px">28</div>
<div class="a rh" style="top:604px">29</div>
<div class="a rh" style="top:621px">30</div>
<div class="a rh" style="top:638px">31</div>
<div class="a rh" style="top:655px">32</div>
<div class="a rh" style="top:672px">33</div>
<div class="a rh" style="top:689px">34</div>
<div class="a rh" style="top:706px">35</div>
<div class="a rh" style="top:723px">36</div>
<div class="a rh" style="top:740px">37</div>
<div class="a rh" style="top:757px">38</div>
<div class="a" style="left:570px;top:263px;width:124px;height:32px;background:#000"></div>
<div class="a" style="left:632px;top:249px;width:62px;height:14px;background:#000"></div>
<div class="a" style="left:631px;top:249px;width:1px;height:46px;background:#505050"></div>
<div class="a" style="left:570px;top:263px;width:124px;height:1px;background:#505050"></div>
<div class="a" style="left:570px;top:280px;width:124px;height:1px;background:#505050"></div>

<div class="c cn" style="left:376px;top:128px">8</div>
<div class="c cn" style="left:440px;top:128px">1</div>
<div class="c cn" style="left:504px;top:128px">38</div>
<div class="c cn" style="left:568px;top:128px">48</div>
<div class="c cn" style="left:632px;top:128px">23</div>
<div class="c cn" style="left:696px;top:128px">17</div>
<div class="c cn" style="left:760px;top:128px">26</div>
<div class="c cn" style="left:824px;top:128px">17</div>
<div class="c cn" style="left:888px;top:128px">3</div>
<div class="c cn" style="left:376px;top:145px">6</div>
<div class="c cn" style="left:440px;top:145px">31</div>
<div class="c cn" style="left:504px;top:145px">26</div>
<div class="c cn" style="left:568px;top:145px">36</div>
<div class="c cn" style="left:632px;top:145px">2</div>
<div class="c cn" style="left:696px;top:145px">8</div>
<div class="c cn" style="left:760px;top:145px">31</div>
<div class="c cn" style="left:824px;top:145px">1</div>
<div class="c cn" style="left:888px;top:145px">48</div>
<div class="c cn" style="left:376px;top:162px">30</div>
<div class="c cn" style="left:440px;top:162px">4</div>
<div class="c cn" style="left:504px;top:162px">18</div>
<div class="c cn" style="left:568px;top:162px">18</div>
<div class="c cn" style="left:632px;top:162px">19</div>
<div class="c cn" style="left:696px;top:162px">4</div>
<div class="c cn" style="left:760px;top:162px">33</div>
<div class="c cn" style="left:824px;top:162px">35</div>
<div class="c cn" style="left:888px;top:162px">25</div>
<div class="c cn" style="left:376px;top:179px">10</div>
<div class="c cn" style="left:440px;top:179px">18</div>
<div class="c cn" style="left:504px;top:179px">22</div>
<div class="c cn" style="left:568px;top:179px">3</div>
<div class="c cn" style="left:632px;top:179px">36</div>
<div class="c cn" style="left:696px;top:179px">21</div>
<div class="c cn" style="left:760px;top:179px">14</div>
<div class="c cn" style="left:824px;top:179px">35</div>
<div class="c cn" style="left:888px;top:179px">36</div>
<div class="c cn" style="left:376px;top:196px">37</div>
<div class="c cn" style="left:440px;top:196px">28</div>
<div class="c cn" style="left:504px;top:196px">0</div>
<div class="c cn" style="left:568px;top:196px">6</div>
<div class="c cn" style="left:632px;top:196px">7</div>
<div class="c cn" style="left:696px;top:196px">7</div>
<div class="c cn" style="left:760px;top:196px">12</div>
<div class="c cn" style="left:824px;top:196px">6</div>
<div class="c cn" style="left:888px;top:196px">22</div>
<div class="c cn" style="left:376px;top:213px">34</div>
<div class="c cn" style="left:440px;top:213px">20</div>
<div class="c cn" style="left:504px;top:213px">42</div>
<div class="c cn" style="left:568px;top:213px">44</div>
<div class="c cn" style="left:632px;top:213px">43</div>
<div class="c cn" style="left:696px;top:213px">19</div>
<div class="c cn" style="left:760px;top:213px">15</div>
<div class="c cn" style="left:824px;top:213px">30</div>
<div class="c cn" style="left:888px;top:213px">21</div>
<div class="c cn" style="left:696px;top:230px">0</div>
<div class="c cr" style="left:376px;top:247px">6</div>
<div class="c cb" style="left:440px;top:247px">5</div>
<div class="c cr" style="left:504px;top:247px">2</div>
<div class="c cb" style="left:568px;top:247px">5</div>
<div class="c co" style="left:632px;top:247px">5</div>
<div class="c cb" style="left:696px;top:247px">3</div>
<div class="c cb" style="left:760px;top:247px">34</div>
<div class="c cb" style="left:824px;top:247px">13</div>
<div class="c cb" style="left:888px;top:247px">17</div>
<div class="c cr" style="left:376px;top:264px">16</div>
<div class="c cb" style="left:440px;top:264px">7</div>
<div class="c cr" style="left:504px;top:264px">18</div>
<div class="c co" style="left:568px;top:264px">21</div>
<div class="c co" style="left:632px;top:264px">10</div>
<div class="c cb" style="left:696px;top:264px">31</div>
<div class="c cb" style="left:760px;top:264px">13</div>
<div class="c cb" style="left:824px;top:264px">17</div>
<div class="c cb" style="left:888px;top:264px">47</div>
<div class="c cr" style="left:376px;top:281px">21</div>
<div class="c cb" style="left:440px;top:281px">20</div>
<div class="c cr" style="left:504px;top:281px">28</div>
<div class="c co" style="left:568px;top:281px">29</div>
<div class="c co" style="left:632px;top:281px">15</div>
<div class="c cb" style="left:696px;top:281px">39</div>
<div class="c cb" style="left:760px;top:281px">47</div>
<div class="c cb" style="left:824px;top:281px">42</div>
<div class="c cb" style="left:888px;top:281px">6</div>
<div class="c cr" style="left:376px;top:298px">22</div>
<div class="c cb" style="left:440px;top:298px">23</div>
<div class="c cr" style="left:504px;top:298px">30</div>
<div class="c cb" style="left:568px;top:298px">35</div>
<div class="c cr" style="left:632px;top:298px">25</div>
<div class="c cb" style="left:696px;top:298px">42</div>
<div class="c cb" style="left:760px;top:298px">16</div>
<div class="c cb" style="left:824px;top:298px">16</div>
<div class="c cb" style="left:888px;top:298px">38</div>
<div class="c cr" style="left:376px;top:315px">30</div>
<div class="c cb" style="left:440px;top:315px">27</div>
<div class="c cr" style="left:504px;top:315px">32</div>
<div class="c cb" style="left:568px;top:315px">35</div>
<div class="c cr" style="left:632px;top:315px">36</div>
<div class="c cb" style="left:696px;top:315px">42</div>
<div class="c cb" style="left:760px;top:315px">18</div>
<div class="c cb" style="left:824px;top:315px">29</div>
<div class="c cb" style="left:888px;top:315px">22</div>
<div class="c cr" style="left:376px;top:332px">35</div>
<div class="c cb" style="left:440px;top:332px">40</div>
<div class="c cr" style="left:504px;top:332px">43</div>
<div class="c cb" style="left:568px;top:332px">37</div>
<div class="c cr" style="left:632px;top:332px">48</div>
<div class="c cr" style="left:696px;top:332px">48</div>
<div class="c cr" style="left:760px;top:332px">44</div>
<div class="c cr" style="left:824px;top:332px">3</div>
<div class="c cr" style="left:888px;top:332px">16</div>
<div class="c cr" style="left:376px;top:349px">6</div>
<div class="c cb" style="left:440px;top:349px">5</div>
<div class="c cr" style="left:504px;top:349px">2</div>
<div class="c cb" style="left:568px;top:349px">5</div>
<div class="c cr" style="left:376px;top:366px">16</div>
<div class="c cb" style="left:440px;top:366px">7</div>
<div class="c cr" style="left:504px;top:366px">18</div>
<div class="c cb" style="left:568px;top:366px">21</div>
<div class="c cr" style="left:376px;top:383px">21</div>
<div class="c cb" style="left:440px;top:383px">20</div>
<div class="c cr" style="left:504px;top:383px">28</div>
<div class="c cb" style="left:568px;top:383px">29</div>
<div class="c cr" style="left:376px;top:400px">22</div>
<div class="c cb" style="left:440px;top:400px">23</div>
<div class="c cr" style="left:504px;top:400px">30</div>
<div class="c cb" style="left:568px;top:400px">35</div>
<div class="c cr" style="left:376px;top:417px">30</div>
<div class="c cb" style="left:440px;top:417px">27</div>
<div class="c cr" style="left:504px;top:417px">32</div>
<div class="c cb" style="left:568px;top:417px">35</div>
<div class="c cr" style="left:376px;top:434px">35</div>
<div class="c cb" style="left:440px;top:434px">40</div>
<div class="c cr" style="left:504px;top:434px">43</div>
<div class="c cb" style="left:568px;top:434px">37</div>
<div class="c cr" style="left:376px;top:451px">6</div>
<div class="c cb" style="left:440px;top:451px">5</div>
<div class="c cr" style="left:504px;top:451px">2</div>
<div class="c cb" style="left:568px;top:451px">5</div>
<div class="c cr" style="left:376px;top:468px">16</div>
<div class="c cb" style="left:440px;top:468px">7</div>
<div class="c cr" style="left:504px;top:468px">18</div>
<div class="c cb" style="left:568px;top:468px">21</div>
<div class="c cr" style="left:376px;top:485px">21</div>
<div class="c cb" style="left:440px;top:485px">20</div>
<div class="c cr" style="left:504px;top:485px">28</div>
<div class="c cb" style="left:568px;top:485px">29</div>
<div class="c cr" style="left:376px;top:502px">22</div>
<div class="c cb" style="left:440px;top:502px">23</div>
<div class="c cr" style="left:504px;top:502px">30</div>
<div class="c cb" style="left:568px;top:502px">35</div>
<div class="c cr" style="left:376px;top:519px">30</div>
<div class="c cb" style="left:440px;top:519px">27</div>
<div class="c cr" style="left:504px;top:519px">32</div>
<div class="c cb" style="left:568px;top:519px">35</div>
<div class="c cr" style="left:376px;top:536px">35</div>
<div class="c cb" style="left:440px;top:536px">40</div>
<div class="c cr" style="left:504px;top:536px">43</div>
<div class="c cb" style="left:568px;top:536px">37</div>
<div class="c cr" style="left:376px;top:553px">6</div>
<div class="c cb" style="left:440px;top:553px">5</div>
<div class="c cr" style="left:504px;top:553px">2</div>
<div class="c cb" style="left:568px;top:553px">5</div>
<div class="c cr" style="left:376px;top:570px">16</div>
<div class="c cb" style="left:440px;top:570px">7</div>
<div class="c cr" style="left:504px;top:570px">18</div>
<div class="c cb" style="left:568px;top:570px">21</div>
<div class="c cr" style="left:376px;top:587px">21</div>
<div class="c cb" style="left:440px;top:587px">20</div>
<div class="c cr" style="left:504px;top:587px">28</div>
<div class="c cb" style="left:568px;top:587px">29</div>
<div class="c cr" style="left:376px;top:604px">22</div>
<div class="c cb" style="left:440px;top:604px">23</div>
<div class="c cr" style="left:504px;top:604px">30</div>
<div class="c cb" style="left:568px;top:604px">35</div>
<div class="c cr" style="left:376px;top:621px">30</div>
<div class="c cb" style="left:440px;top:621px">27</div>
<div class="c cr" style="left:504px;top:621px">32</div>
<div class="c cb" style="left:568px;top:621px">35</div>
<div class="c cr" style="left:376px;top:638px">35</div>
<div class="c cb" style="left:440px;top:638px">40</div>
<div class="c cr" style="left:504px;top:638px">43</div>
<div class="c cb" style="left:568px;top:638px">37</div>
<div class="c cr" style="left:376px;top:655px">6</div>
<div class="c cb" style="left:440px;top:655px">5</div>
<div class="c cr" style="left:504px;top:655px">2</div>
<div class="c cb" style="left:568px;top:655px">5</div>
<div class="c cr" style="left:376px;top:672px">16</div>
<div class="c cb" style="left:440px;top:672px">7</div>
<div class="c cr" style="left:504px;top:672px">18</div>
<div class="c cb" style="left:568px;top:672px">21</div>
<div class="c cr" style="left:376px;top:689px">21</div>
<div class="c cb" style="left:440px;top:689px">20</div>
<div class="c cr" style="left:504px;top:689px">28</div>
<div class="c cb" style="left:568px;top:689px">29</div>
<div class="c cr" style="left:376px;top:706px">22</div>
<div class="c cb" style="left:440px;top:706px">23</div>
<div class="c cr" style="left:504px;top:706px">30</div>
<div class="c cb" style="left:568px;top:706px">35</div>
<div class="c cr" style="left:376px;top:723px">30</div>
<div class="c cb" style="left:440px;top:723px">27</div>
<div class="c cr" style="left:504px;top:723px">32</div>
<div class="c cb" style="left:568px;top:723px">35</div>
<div class="c cr" style="left:376px;top:740px">35</div>
<div class="c cb" style="left:440px;top:740px">40</div>
<div class="c cr" style="left:504px;top:740px">43</div>
<div class="c cb" style="left:568px;top:740px">37</div>
<div class="c cr" style="left:376px;top:757px">6</div>
<div class="c cb" style="left:440px;top:757px">5</div>
<div class="c cr" style="left:504px;top:757px">2</div>
<div class="c cb" style="left:568px;top:757px">5</div>
<div class="a" style="left:567px;top:246px;width:130px;height:52px;border:2px solid #2a2a2a"></div>
<div class="a" style="left:569px;top:248px;width:126px;height:48px;border:1px solid #fff"></div>
<div class="a" style="left:693px;top:294px;width:6px;height:6px;background:#000;border:1px solid #fff"></div>

</div></div>
<div class="a" style="left:445px;top:358px;width:539px;height:404px;background:#fff"></div>
<div class="a" style="left:454px;top:367px;width:530px;height:395px;background:#000"></div>
<div class="a" style="left:447px;top:360px;width:534px;height:395px;border:1px solid #000;background:radial-gradient(ellipse 350px 270px at 712px 560px,#00a8f0 0%,#009ae2 40%,#0086ce 72%,#0078c0 100%) -447px -360px / 1008px 813px;overflow:hidden">
<svg width="1008" height="813" style="left:-448px;top:-361px" viewBox="0 0 1008 813">
<polyline points="600.3,618.4 675.2,559.2 842.1,605.7" stroke="#000" stroke-width="1" fill="none"/>
<polyline points="597.7,584.3 674.4,527.1 845.0,572.6" stroke="#000" stroke-width="1" fill="none"/>
<polyline points="594.9,548.6 673.5,493.6 848.0,537.9" stroke="#000" stroke-width="1" fill="none"/>
<polyline points="592.1,511.2 672.6,458.6 851.1,501.5" stroke="#000" stroke-width="1" fill="none"/>
<polyline points="589.0,471.9 671.7,422.1 854.4,463.5" stroke="#000" stroke-width="1" fill="none"/>
<polyline points="585.9,430.7 670.8,383.9 857.9,423.6" stroke="#000" stroke-width="1" fill="none"/>
<polyline points="600.3,618.4 585.9,430.7" stroke="#000" stroke-width="1" fill="none"/>
<polyline points="675.2,559.2 670.8,383.9" stroke="#000" stroke-width="1" fill="none"/>
<polyline points="842.1,605.7 857.9,423.6" stroke="#000" stroke-width="1" fill="none"/>
<polyline points="600.3,618.4 596.3,620.4" stroke="#000" stroke-width="1" fill="none"/>
<polyline points="842.1,605.7 848.1,606.7" stroke="#000" stroke-width="1" fill="none"/>
<polyline points="597.7,584.3 593.7,586.3" stroke="#000" stroke-width="1" fill="none"/>
<polyline points="845.0,572.6 851.0,573.6" stroke="#000" stroke-width="1" fill="none"/>
<polyline points="594.9,548.6 590.9,550.6" stroke="#000" stroke-width="1" fill="none"/>
<polyline points="848.0,537.9 854.0,538.9" stroke="#000" stroke-width="1" fill="none"/>
<polyline points="592.1,511.2 588.1,513.2" stroke="#000" stroke-width="1" fill="none"/>
<polyline points="851.1,501.5 857.1,502.5" stroke="#000" stroke-width="1" fill="none"/>
<polyline points="589.0,471.9 585.0,473.9" stroke="#000" stroke-width="1" fill="none"/>
<polyline points="854.4,463.5 860.4,464.5" stroke="#000" stroke-width="1" fill="none"/>
<polyline points="585.9,430.7 581.9,432.7" stroke="#000" stroke-width="1" fill="none"/>
<polyline points="857.9,423.6 863.9,424.6" stroke="#000" stroke-width="1" fill="none"/>
<polygon points="600.3,618.4 780.0,674.2 842.1,605.7 675.2,559.2" fill="#b4b4b4" stroke="#000" stroke-width="0.8"/>
<polygon points="600.3,618.4 780.0,674.2 779.1,692.8 601.7,636.5" fill="#e6e6e6" stroke="#000" stroke-width="0.8"/>
<polygon points="780.0,674.2 842.1,605.7 840.6,623.4 779.1,692.8" fill="#a8a8a8" stroke="#000" stroke-width="0.8"/>
<polyline points="787.6,665.8 774.3,661.8" stroke="#000" stroke-width="1" fill="none"/>
<polyline points="794.9,657.7 781.8,653.7" stroke="#000" stroke-width="1" fill="none"/>
<polyline points="802.2,649.8 789.1,645.9" stroke="#000" stroke-width="1" fill="none"/>
<polyline points="809.2,642.0 796.3,638.2" stroke="#000" stroke-width="1" fill="none"/>
<polyline points="816.1,634.4 803.3,630.7" stroke="#000" stroke-width="1" fill="none"/>
<polyline points="822.8,627.0 810.1,623.4" stroke="#000" stroke-width="1" fill="none"/>
<polyline points="829.4,619.8 816.8,616.2" stroke="#000" stroke-width="1" fill="none"/>
<polyline points="835.8,612.7 823.3,609.2" stroke="#000" stroke-width="1" fill="none"/>
<polyline points="613.3,622.4 614.5,640.5 614.7,643.8" stroke="#000" stroke-width="1" fill="none"/>
<polyline points="626.4,626.5 627.5,644.7 627.6,647.9" stroke="#000" stroke-width="1" fill="none"/>
<polyline points="639.6,630.6 640.5,648.8 640.7,652.1" stroke="#000" stroke-width="1" fill="none"/>
<polyline points="653.0,634.7 653.8,653.0 653.9,656.3" stroke="#000" stroke-width="1" fill="none"/>
<polyline points="666.5,638.9 667.1,657.2 667.2,660.5" stroke="#000" stroke-width="1" fill="none"/>
<polyline points="680.2,643.2 680.6,661.5 680.7,664.8" stroke="#000" stroke-width="1" fill="none"/>
<polyline points="694.0,647.5 694.2,665.9 694.3,669.1" stroke="#000" stroke-width="1" fill="none"/>
<polyline points="708.0,651.8 708.0,670.2 708.0,673.5" stroke="#000" stroke-width="1" fill="none"/>
<polyline points="722.1,656.2 721.9,674.6 721.9,677.9" stroke="#000" stroke-width="1" fill="none"/>
<polyline points="736.3,660.6 736.0,679.1 736.0,682.4" stroke="#000" stroke-width="1" fill="none"/>
<polyline points="750.7,665.1 750.2,683.6 750.1,686.9" stroke="#000" stroke-width="1" fill="none"/>
<polyline points="765.3,669.6 764.6,688.2 764.5,691.5" stroke="#000" stroke-width="1" fill="none"/>
<polyline points="787.6,665.8 786.6,684.4 788.3,688.3" stroke="#000" stroke-width="1" fill="none"/>
<polyline points="794.9,657.7 793.9,676.1 795.6,680.0" stroke="#000" stroke-width="1" fill="none"/>
<polyline points="802.2,649.8 801.0,668.1 802.7,671.9" stroke="#000" stroke-width="1" fill="none"/>
<polyline points="809.2,642.0 808.0,660.2 809.6,664.0" stroke="#000" stroke-width="1" fill="none"/>
<polyline points="816.1,634.4 814.8,652.5 816.4,656.3" stroke="#000" stroke-width="1" fill="none"/>
<polyline points="822.8,627.0 821.5,645.0 823.0,648.7" stroke="#000" stroke-width="1" fill="none"/>
<polyline points="829.4,619.8 828.0,637.6 829.5,641.3" stroke="#000" stroke-width="1" fill="none"/>
<polyline points="835.8,612.7 834.3,630.4 835.9,634.1" stroke="#000" stroke-width="1" fill="none"/>
<polygon points="675.4,555.7 685.1,399.6 688.9,397.4 678.9,553.0" fill="#005a00"/>
<polygon points="685.1,399.6 699.6,488.3 703.1,485.8 688.9,397.4" fill="#005a00"/>
<polygon points="699.6,488.3 712.7,451.6 716.3,449.2 703.1,485.8" fill="#005a00"/>
<polygon points="712.7,451.6 726.0,505.5 729.4,502.9 716.3,449.2" fill="#005a00"/>
<polygon points="726.0,505.5 739.2,512.4 742.6,509.8 729.4,502.9" fill="#005a00"/>
<polygon points="739.2,512.4 750.9,586.5 754.1,583.5 742.6,509.8" fill="#005a00"/>
<polygon points="750.9,586.5 765.8,533.3 769.0,530.5 754.1,583.5" fill="#005a00"/>
<polygon points="765.8,533.3 784.1,425.1 787.5,422.7 769.0,530.5" fill="#005a00"/>
<polygon points="784.1,425.1 791.2,577.8 794.3,574.9 787.5,422.7" fill="#005a00"/>
<polygon points="791.2,577.8 811.7,467.0 814.9,464.4 794.3,574.9" fill="#005a00"/>
<polygon points="811.7,467.0 822.3,529.9 825.3,527.1 814.9,464.4" fill="#005a00"/>
<polygon points="822.3,529.9 834.9,554.9 837.9,551.9 825.3,527.1" fill="#005a00"/>
<polygon points="830.7,608.9 834.9,554.9 837.9,551.9 833.5,605.8" fill="#006a00"/>
<polygon points="675.7,565.3 675.4,555.7 685.1,399.6 699.6,488.3 712.7,451.6 726.0,505.5 739.2,512.4 750.9,586.5 765.8,533.3 784.1,425.1 791.2,577.8 811.7,467.0 822.3,529.9 834.9,554.9 830.7,608.9" fill="#008000"/>
<polygon points="666.3,515.3 680.2,571.8 683.7,569.0 669.9,512.7" fill="#5a0000"/>
<polygon points="680.2,571.8 691.1,457.6 694.8,455.1 683.7,569.0" fill="#5a0000"/>
<polygon points="691.1,457.6 704.7,460.8 708.3,458.3 694.8,455.1" fill="#5a0000"/>
<polygon points="704.7,460.8 718.1,566.2 721.5,563.3 708.3,458.3" fill="#5a0000"/>
<polygon points="718.1,566.2 732.1,486.0 735.6,483.4 721.5,563.3" fill="#5a0000"/>
<polygon points="732.1,486.0 743.8,593.0 747.0,590.0 735.6,483.4" fill="#5a0000"/>
<polygon points="743.8,593.0 758.1,553.4 761.4,550.5 747.0,590.0" fill="#5a0000"/>
<polygon points="758.1,553.4 772.3,543.2 775.5,540.3 761.4,550.5" fill="#5a0000"/>
<polygon points="772.3,543.2 790.5,453.8 793.8,451.2 775.5,540.3" fill="#5a0000"/>
<polygon points="790.5,453.8 799.9,554.0 803.0,551.1 793.8,451.2" fill="#5a0000"/>
<polygon points="799.9,554.0 817.1,510.7 820.3,507.8 803.0,551.1" fill="#5a0000"/>
<polygon points="817.1,510.7 825.0,606.0 827.9,602.8 820.3,507.8" fill="#5a0000"/>
<polygon points="824.2,615.9 825.0,606.0 827.9,602.8 827.1,612.7" fill="#6a0000"/>
<polygon points="668.0,571.5 666.3,515.3 680.2,571.8 691.1,457.6 704.7,460.8 718.1,566.2 732.1,486.0 743.8,593.0 758.1,553.4 772.3,543.2 790.5,453.8 799.9,554.0 817.1,510.7 825.0,606.0 824.2,615.9" fill="#800000"/>
<polygon points="657.0,489.6 669.7,474.7 673.4,472.2 660.8,487.0" fill="#303030"/>
<polygon points="669.7,474.7 682.9,470.6 686.7,468.1 673.4,472.2" fill="#303030"/>
<polygon points="682.9,470.6 697.3,542.0 700.8,539.2 686.7,468.1" fill="#303030"/>
<polygon points="697.3,542.0 710.5,552.4 714.0,549.5 700.8,539.2" fill="#303030"/>
<polygon points="710.5,552.4 723.8,545.7 727.3,542.8 714.0,549.5" fill="#303030"/>
<polygon points="723.8,545.7 736.5,599.7 739.8,596.7 727.3,542.8" fill="#303030"/>
<polygon points="736.5,599.7 752.6,483.8 756.1,481.1 739.8,596.7" fill="#303030"/>
<polygon points="752.6,483.8 764.5,563.6 767.8,560.6 756.1,481.1" fill="#303030"/>
<polygon points="764.5,563.6 783.8,439.5 787.2,436.9 767.8,560.6" fill="#303030"/>
<polygon points="783.8,439.5 792.9,560.7 796.1,557.6 787.2,436.9" fill="#303030"/>
<polygon points="792.9,560.7 807.5,557.4 810.7,554.3 796.1,557.6" fill="#303030"/>
<polygon points="807.5,557.4 829.0,462.0 832.3,459.3 810.7,554.3" fill="#303030"/>
<polygon points="817.6,623.0 829.0,462.0 832.3,459.3 820.6,619.8" fill="#3c3c3c"/>
<polygon points="660.1,577.7 657.0,489.6 669.7,474.7 682.9,470.6 697.3,542.0 710.5,552.4 723.8,545.7 736.5,599.7 752.6,483.8 764.5,563.6 783.8,439.5 792.9,560.7 807.5,557.4 829.0,462.0 817.6,623.0" fill="#484848"/>
<polygon points="649.8,527.3 663.8,561.5 667.4,558.6 653.5,524.5" fill="#00a8a8"/>
<polygon points="663.8,561.5 676.9,578.4 680.5,575.5 667.4,558.6" fill="#00a8a8"/>
<polygon points="676.9,578.4 688.9,523.7 692.6,520.9 680.5,575.5" fill="#00a8a8"/>
<polygon points="688.9,523.7 702.8,575.8 706.3,572.8 692.6,520.9" fill="#00a8a8"/>
<polygon points="702.8,575.8 716.1,538.0 719.6,535.2 706.3,572.8" fill="#00a8a8"/>
<polygon points="716.1,538.0 729.1,606.6 732.5,603.5 719.6,535.2" fill="#00a8a8"/>
<polygon points="729.1,606.6 742.6,600.5 745.9,597.4 732.5,603.5" fill="#00a8a8"/>
<polygon points="742.6,600.5 758.9,504.9 762.4,502.1 745.9,597.4" fill="#00a8a8"/>
<polygon points="758.9,504.9 774.7,477.5 778.2,474.8 762.4,502.1" fill="#00a8a8"/>
<polygon points="774.7,477.5 790.3,469.1 793.8,466.4 778.2,474.8" fill="#00a8a8"/>
<polygon points="790.3,469.1 805.6,472.7 809.0,469.9 793.8,466.4" fill="#00a8a8"/>
<polygon points="805.6,472.7 822.8,451.6 826.1,448.9 809.0,469.9" fill="#00a8a8"/>
<polygon points="810.9,630.4 822.8,451.6 826.1,448.9 813.9,627.0" fill="#00c8c8"/>
<polygon points="652.1,584.2 649.8,527.3 663.8,561.5 676.9,578.4 688.9,523.7 702.8,575.8 716.1,538.0 729.1,606.6 742.6,600.5 758.9,504.9 774.7,477.5 790.3,469.1 805.6,472.7 822.8,451.6 810.9,630.4" fill="#00f0f0"/>
<polygon points="640.2,512.2 656.2,587.9 659.9,584.9 644.2,509.4" fill="#a000a0"/>
<polygon points="656.2,587.9 667.3,533.5 671.1,530.7 659.9,584.9" fill="#a000a0"/>
<polygon points="667.3,533.5 679.4,474.2 683.3,471.6 671.1,530.7" fill="#a000a0"/>
<polygon points="679.4,474.2 694.8,582.5 698.4,579.5 683.3,471.6" fill="#a000a0"/>
<polygon points="694.8,582.5 707.7,453.6 711.5,451.0 698.4,579.5" fill="#a000a0"/>
<polygon points="707.7,453.6 721.5,613.6 725.0,610.4 711.5,451.0" fill="#a000a0"/>
<polygon points="721.5,613.6 735.1,600.8 738.6,597.7 725.0,610.4" fill="#a000a0"/>
<polygon points="735.1,600.8 749.2,587.7 752.7,584.5 738.6,597.7" fill="#a000a0"/>
<polygon points="749.2,587.7 763.8,574.0 767.2,570.9 752.7,584.5" fill="#a000a0"/>
<polygon points="763.8,574.0 779.7,541.5 783.1,538.5 767.2,570.9" fill="#a000a0"/>
<polygon points="779.7,541.5 796.7,503.0 800.1,500.1 783.1,538.5" fill="#a000a0"/>
<polygon points="796.7,503.0 815.2,457.7 818.6,455.0 800.1,500.1" fill="#a000a0"/>
<polygon points="804.0,637.9 815.2,457.7 818.6,455.0 807.1,634.5" fill="#c800c8"/>
<polygon points="643.9,590.7 640.2,512.2 656.2,587.9 667.3,533.5 679.4,474.2 694.8,582.5 707.7,453.6 721.5,613.6 735.1,600.8 749.2,587.7 763.8,574.0 779.7,541.5 796.7,503.0 815.2,457.7 804.0,637.9" fill="#f000f0"/>
<polygon points="626.4,422.3 642.6,473.2 646.7,470.6 630.6,419.9" fill="#a8a800"/>
<polygon points="642.6,473.2 658.9,543.5 662.8,540.6 646.7,470.6" fill="#a8a800"/>
<polygon points="658.9,543.5 673.8,599.0 677.5,595.9 662.8,540.6" fill="#a8a800"/>
<polygon points="673.8,599.0 686.8,592.8 690.4,589.6 677.5,595.9" fill="#a8a800"/>
<polygon points="686.8,592.8 698.9,455.4 702.9,452.8 690.4,589.6" fill="#a8a800"/>
<polygon points="698.9,455.4 713.7,620.7 717.3,617.5 702.9,452.8" fill="#a8a800"/>
<polygon points="713.7,620.7 727.4,608.0 730.9,604.7 717.3,617.5" fill="#a8a800"/>
<polygon points="727.4,608.0 742.3,555.4 745.8,552.3 730.9,604.7" fill="#a8a800"/>
<polygon points="742.3,555.4 757.6,529.3 761.2,526.3 745.8,552.3" fill="#a8a800"/>
<polygon points="757.6,529.3 773.4,509.8 777.0,506.8 761.2,526.3" fill="#a8a800"/>
<polygon points="773.4,509.8 788.8,513.6 792.3,510.6 777.0,506.8" fill="#a8a800"/>
<polygon points="788.8,513.6 804.7,509.5 808.2,506.5 792.3,510.6" fill="#a8a800"/>
<polygon points="796.9,645.5 804.7,509.5 808.2,506.5 800.1,642.0" fill="#c8c800"/>
<polygon points="635.5,597.4 626.4,422.3 642.6,473.2 658.9,543.5 673.8,599.0 686.8,592.8 698.9,455.4 713.7,620.7 727.4,608.0 742.3,555.4 757.6,529.3 773.4,509.8 788.8,513.6 804.7,509.5 796.9,645.5" fill="#f0f000"/>
<polygon points="619.0,467.9 635.2,517.2 639.3,514.4 623.3,465.3" fill="#0000a0"/>
<polygon points="635.2,517.2 650.1,550.1 654.1,547.1 639.3,514.4" fill="#0000a0"/>
<polygon points="650.1,550.1 663.3,539.4 667.2,536.4 654.1,547.1" fill="#0000a0"/>
<polygon points="663.3,539.4 679.0,620.0 682.7,616.7 667.2,536.4" fill="#0000a0"/>
<polygon points="679.0,620.0 690.1,469.6 694.1,466.9 682.7,616.7" fill="#0000a0"/>
<polygon points="690.1,469.6 705.8,628.1 709.4,624.7 694.1,466.9" fill="#0000a0"/>
<polygon points="705.8,628.1 719.4,625.5 723.0,622.1 709.4,624.7" fill="#0000a0"/>
<polygon points="719.4,625.5 734.0,573.4 737.7,570.2 723.0,622.1" fill="#0000a0"/>
<polygon points="734.0,573.4 749.4,540.0 753.1,536.9 737.7,570.2" fill="#0000a0"/>
<polygon points="749.4,540.0 764.7,536.2 768.3,533.1 753.1,536.9" fill="#0000a0"/>
<polygon points="764.7,536.2 780.3,532.4 783.9,529.2 768.3,533.1" fill="#0000a0"/>
<polygon points="780.3,532.4 798.2,491.7 801.8,488.7 783.9,529.2" fill="#0000a0"/>
<polygon points="789.7,653.4 798.2,491.7 801.8,488.7 792.9,649.8" fill="#0000c8"/>
<polygon points="626.9,604.3 619.0,467.9 635.2,517.2 650.1,550.1 663.3,539.4 679.0,620.0 690.1,469.6 705.8,628.1 719.4,625.5 734.0,573.4 749.4,540.0 764.7,536.2 780.3,532.4 798.2,491.7 789.7,653.4" fill="#0000f0"/>
<polygon points="618.0,608.0 624.9,504.7 629.2,501.9 621.9,604.8" fill="#00a000"/>
<polygon points="624.9,504.7 643.5,605.8 647.4,602.6 629.2,501.9" fill="#00a000"/>
<polygon points="643.5,605.8 654.9,560.7 658.9,557.6 647.4,602.6" fill="#00a000"/>
<polygon points="654.9,560.7 667.7,527.4 671.8,524.4 658.9,557.6" fill="#00a000"/>
<polygon points="667.7,527.4 682.7,561.2 686.6,558.1 671.8,524.4" fill="#00a000"/>
<polygon points="682.7,561.2 697.7,635.6 701.3,632.2 686.6,558.1" fill="#00a000"/>
<polygon points="697.7,635.6 711.4,622.7 715.0,619.4 701.3,632.2" fill="#00a000"/>
<polygon points="711.4,622.7 725.5,620.0 729.1,616.6 715.0,619.4" fill="#00a000"/>
<polygon points="725.5,620.0 740.6,577.4 744.3,574.1 729.1,616.6" fill="#00a000"/>
<polygon points="740.6,577.4 755.8,570.3 759.4,567.0 744.3,574.1" fill="#00a000"/>
<polygon points="755.8,570.3 771.5,559.1 775.1,555.8 759.4,567.0" fill="#00a000"/>
<polygon points="771.5,559.1 789.5,511.0 793.2,507.9 775.1,555.8" fill="#00a000"/>
<polygon points="782.3,661.4 789.5,511.0 793.2,507.9 785.6,657.8" fill="#00c800"/>
<polygon points="618.2,611.3 618.0,608.0 624.9,504.7 643.5,605.8 654.9,560.7 667.7,527.4 682.7,561.2 697.7,635.6 711.4,622.7 725.5,620.0 740.6,577.4 755.8,570.3 771.5,559.1 789.5,511.0 782.3,661.4" fill="#00f000"/>
<polygon points="607.3,591.3 621.0,602.2 625.0,598.9 611.4,588.2" fill="#a40000"/>
<polygon points="621.0,602.2 629.6,518.8 633.9,515.8 625.0,598.9" fill="#a40000"/>
<polygon points="629.6,518.8 647.1,596.3 651.2,593.1 633.9,515.8" fill="#a40000"/>
<polygon points="647.1,596.3 657.3,498.9 661.5,495.9 651.2,593.1" fill="#a40000"/>
<polygon points="657.3,498.9 672.4,514.7 676.6,511.6 661.5,495.9" fill="#a40000"/>
<polygon points="672.4,514.7 689.4,643.2 693.1,639.7 676.6,511.6" fill="#a40000"/>
<polygon points="689.4,643.2 703.1,626.9 706.8,623.5 693.1,639.7" fill="#a40000"/>
<polygon points="703.1,626.9 717.3,595.4 721.1,592.1 706.8,623.5" fill="#a40000"/>
<polygon points="717.3,595.4 732.3,581.1 736.1,577.7 721.1,592.1" fill="#a40000"/>
<polygon points="732.3,581.1 747.4,581.5 751.1,578.1 736.1,577.7" fill="#a40000"/>
<polygon points="747.4,581.5 763.7,554.7 767.4,551.4 751.1,578.1" fill="#a40000"/>
<polygon points="763.7,554.7 780.3,538.8 784.0,535.5 767.4,551.4" fill="#a40000"/>
<polygon points="774.7,669.6 780.3,538.8 784.0,535.5 778.1,665.9" fill="#b80000"/>
<polygon points="609.2,618.4 607.3,591.3 621.0,602.2 629.6,518.8 647.1,596.3 657.3,498.9 672.4,514.7 689.4,643.2 703.1,626.9 717.3,595.4 732.3,581.1 747.4,581.5 763.7,554.7 780.3,538.8 774.7,669.6" fill="#e00000"/>
<text x="0" y="0" transform="translate(595.8 623.4) rotate(-32) skewX(-10)" font-family="Liberation Sans" font-size="10" fill="#000" text-anchor="end">0</text>
<text x="0" y="0" transform="translate(850.6 611.7) rotate(-3) skewX(-8)" font-family="Liberation Sans" font-weight="bold" font-size="10" fill="#000">0</text>
<text x="0" y="0" transform="translate(593.2 589.3) rotate(-32) skewX(-10)" font-family="Liberation Sans" font-size="10" fill="#000" text-anchor="end">10</text>
<text x="0" y="0" transform="translate(853.5 578.6) rotate(-3) skewX(-8)" font-family="Liberation Sans" font-weight="bold" font-size="10" fill="#000">10</text>
<text x="0" y="0" transform="translate(590.4 553.6) rotate(-32) skewX(-10)" font-family="Liberation Sans" font-size="10" fill="#000" text-anchor="end">20</text>
<text x="0" y="0" transform="translate(856.5 543.9) rotate(-3) skewX(-8)" font-family="Liberation Sans" font-weight="bold" font-size="10" fill="#000">20</text>
<text x="0" y="0" transform="translate(587.6 516.2) rotate(-32) skewX(-10)" font-family="Liberation Sans" font-size="10" fill="#000" text-anchor="end">30</text>
<text x="0" y="0" transform="translate(859.6 507.5) rotate(-3) skewX(-8)" font-family="Liberation Sans" font-weight="bold" font-size="10" fill="#000">30</text>
<text x="0" y="0" transform="translate(584.5 476.9) rotate(-32) skewX(-10)" font-family="Liberation Sans" font-size="10" fill="#000" text-anchor="end">40</text>
<text x="0" y="0" transform="translate(862.9 469.5) rotate(-3) skewX(-8)" font-family="Liberation Sans" font-weight="bold" font-size="10" fill="#000">40</text>
<text x="0" y="0" transform="translate(581.4 435.7) rotate(-32) skewX(-10)" font-family="Liberation Sans" font-size="10" fill="#000" text-anchor="end">50</text>
<text x="0" y="0" transform="translate(866.4 429.6) rotate(-3) skewX(-8)" font-family="Liberation Sans" font-weight="bold" font-size="10" fill="#000">50</text>
<text x="0" y="0" transform="translate(580.5 628) rotate(-94) skewX(-8)" font-family="Liberation Sans" font-weight="bold" font-size="12" fill="#f00000" textLength="174" lengthAdjust="spacingAndGlyphs">Percentage Deviation</text>
<text x="0" y="0" transform="translate(630 663) rotate(21) skewX(16)" font-family="Liberation Sans" font-weight="bold" font-size="11.5" fill="#fff" textLength="99" lengthAdjust="spacingAndGlyphs">Row Numbers</text>
<g font-family="Liberation Sans" font-weight="bold" fill="#f6eeb0" font-size="15.5">
<text x="481.5" y="420.8">Serie</text>
<text x="481.5" y="466.6">Serie</text>
<text x="481.5" y="512.3">Serie</text>
<text x="481.5" y="558">Serie</text>
<text x="481.5" y="603.8">Serie</text>
<text x="843.5" y="388.8" textLength="127" lengthAdjust="spacingAndGlyphs">Lottery Numbers</text>
<text x="479" y="730">Deviation</text>
</g>
<rect x="453.5" y="407" width="19.5" height="19.5" fill="#ff0000"/>
<rect x="453.5" y="452.7" width="19.5" height="19.5" fill="#00ff00"/>
<rect x="453.5" y="498.4" width="19.5" height="19.5" fill="#0000ff"/>
<rect x="453.5" y="544.1" width="19.5" height="19.5" fill="#ffff00"/>
<rect x="453.5" y="589.8" width="19.5" height="19.5" fill="#ff00ff"/>
</svg>
</div>

<div class="a" style="left:332px;top:770px;width:391px;height:16px;background:#c0c0c0"></div>
<div class="a" style="left:332px;top:770px;width:34px;height:16px;background:linear-gradient(90deg,#e6e6e6,#f2f2f2 50%,#e6e6e6 50%,#f2f2f2)"></div>
<div class="a" style="left:984px;top:110px;width:16px;height:660px;background:linear-gradient(90deg,#e4e4e4,#f2f2f2 40%,#f2f2f2 70%,#e8e8e8)"></div>
<div class="a" style="left:723px;top:770px;width:261px;height:16px;background:linear-gradient(180deg,#e4e4e4,#f2f2f2 40%,#f2f2f2 70%,#e8e8e8)"></div>
<div class="a" style="left:984px;top:770px;width:16px;height:16px;background:#c0c0c0"></div>
<svg width="1008" height="813" style="left:0;top:0" viewBox="0 0 1008 813">
<defs>
<linearGradient id="tThumbV" x1="0" y1="0" x2="1" y2="0"><stop offset="0" stop-color="#f4f4f4"/><stop offset="0.5" stop-color="#e8e8e8"/><stop offset="0.5" stop-color="#d8d8d8"/><stop offset="1" stop-color="#c8c8c8"/></linearGradient>
<linearGradient id="tThumbH" x1="0" y1="0" x2="0" y2="1"><stop offset="0" stop-color="#f4f4f4"/><stop offset="0.5" stop-color="#e8e8e8"/><stop offset="0.5" stop-color="#d8d8d8"/><stop offset="1" stop-color="#c8c8c8"/></linearGradient>
</defs>
<path d="M366 770.5 H984" stroke="#000" stroke-width="1"/>
<path d="M366.5 770 L374.5 785.5 H426 L434 770 Z" fill="#fff"/>
<path d="M366.5 770 L374.5 785.5 M434 770 L426 785.5" stroke="#000" stroke-width="1.2"/>
<path d="M374 785.5 H426" stroke="#808080"/>
<text x="379" y="782.5" font-family="Liberation Sans" font-size="13" fill="#000">Sheet1</text>
<path d="M336.5 778 l4 -3.5 v7 z M360.5 778 l-4 -3.5 v7 z" fill="#5a5a5a"/>
<path d="M719.5 770 V785" stroke="#000"/>
<path d="M720.5 771 V785" stroke="#fff"/><path d="M722 771 V785" stroke="#808080"/>
<!-- h scrollbar -->
<path d="M729 778 l4.2 -4 v8 z M977.5 778 l-4.2 -4 v8 z" fill="#3a3a3a"/>
<rect x="741.5" y="771.5" width="14" height="14" rx="1.5" fill="url(#tThumbH)" stroke="#9a9a9a"/>
<!-- v scrollbar -->
<path d="M992 115.5 l-4.5 4.5 h9 z M992 765 l-4.5 -4.5 h9 z" fill="#3a3a3a"/>
<rect x="985.5" y="128.5" width="14" height="14" rx="1.5" fill="url(#tThumbV)" stroke="#9a9a9a"/>

</svg>


<div id="status" class="a"></div>
<div class="a sep" style="left:322px"></div>
<div class="a sep" style="left:472px"></div>
<div class="a sep" style="left:582px"></div>
<div class="a sep" style="left:732px"></div>
<div class="a sep" style="left:782px"></div>
<div class="a sep" style="left:832px"></div>
<div class="a sep" style="left:882px"></div>
<div class="a sep" style="left:952px"></div>
<div class="a st" style="left:10px">Merge and Center Across Cells</div>
<div class="a st" style="left:327px">Active Selection: D8:E10</div>
<div class="a st" style="left:477px">Modified</div>
<div class="a st" style="left:587px">Zoom Factor: 100%</div>
<div class="a st" style="left:737px">NUM</div>
<div class="a st" style="left:887px">INSERT</div>
<svg width="1008" height="813" style="left:0;top:0" viewBox="0 0 1008 813"><g fill="#9a9a9a"><rect x="990.5" y="801.5" width="1.5" height="1.5"/><rect x="993.5" y="801.5" width="1.5" height="1.5"/><rect x="996.5" y="801.5" width="1.5" height="1.5"/><rect x="993.5" y="798.5" width="1.5" height="1.5"/><rect x="996.5" y="798.5" width="1.5" height="1.5"/><rect x="996.5" y="795.5" width="1.5" height="1.5"/></g></svg>
</body></html>
